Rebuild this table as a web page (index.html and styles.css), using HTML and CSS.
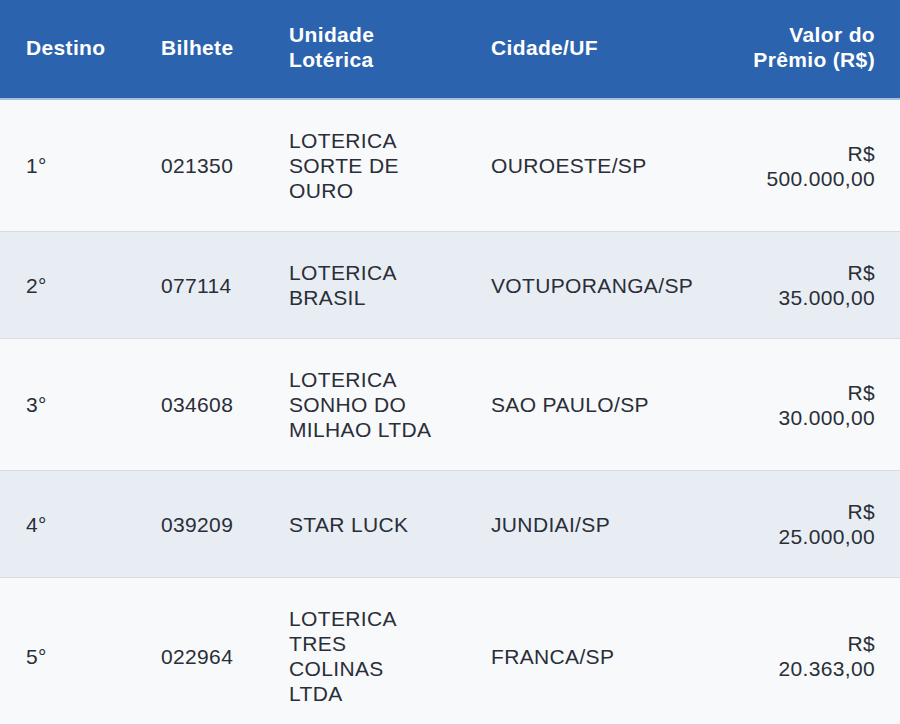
FILE: index.html
```html
<!DOCTYPE html>
<html lang="pt-BR">
<head>
<meta charset="utf-8">
<title>Resultado</title>
<link rel="stylesheet" href="styles.css">
</head>
<body>
<table class="results">
  <colgroup>
    <col class="c1"><col class="c2"><col class="c3"><col class="c4"><col class="c5">
  </colgroup>
  <thead>
    <tr>
      <th>Destino</th>
      <th>Bilhete</th>
      <th>Unidade<br>Lotérica</th>
      <th>Cidade/UF</th>
      <th class="num">Valor do<br>Prêmio (R$)</th>
    </tr>
  </thead>
  <tbody>
    <tr>
      <td>1°</td><td>021350</td><td>LOTERICA<br>SORTE DE<br>OURO</td><td>OUROESTE/SP</td><td class="num">R$<br>500.000,00</td>
    </tr>
    <tr>
      <td>2°</td><td>077114</td><td>LOTERICA<br>BRASIL</td><td>VOTUPORANGA/SP</td><td class="num">R$<br>35.000,00</td>
    </tr>
    <tr>
      <td>3°</td><td>034608</td><td>LOTERICA<br>SONHO DO<br>MILHAO LTDA</td><td>SAO PAULO/SP</td><td class="num">R$<br>30.000,00</td>
    </tr>
    <tr>
      <td>4°</td><td>039209</td><td>STAR LUCK</td><td>JUNDIAI/SP</td><td class="num">R$<br>25.000,00</td>
    </tr>
    <tr>
      <td>5°</td><td>022964</td><td>LOTERICA<br>TRES<br>COLINAS<br>LTDA</td><td>FRANCA/SP</td><td class="num">R$<br>20.363,00</td>
    </tr>
  </tbody>
</table>
</body>
</html>
```
FILE: styles.css
```css
html, body {
  margin: 0;
  padding: 0;
  background: #f7f9fa;
}
body {
  font-family: "Liberation Sans", Arial, sans-serif;
  color: #2a2e38;
}
.results {
  width: 900px;
  border-collapse: collapse;
  table-layout: fixed;
}
.c1 { width: 135px; }
.c2 { width: 128px; }
.c3 { width: 202px; }
.c4 { width: 235px; }
.c5 { width: 200px; }
.results th {
  background: #2c63ae;
  color: #ffffff;
  font-weight: bold;
  font-size: 21px;
  letter-spacing: 0.35px;
  line-height: 25px;
  text-align: left;
  padding: 22px 25px 26px 26px;
  border-bottom: 2px solid #a9bfdd;
  vertical-align: middle;
  white-space: nowrap;
}
.results td {
  font-size: 21px;
  letter-spacing: 0.35px;
  line-height: 25px;
  padding: 28px 25px 28px 26px;
  vertical-align: middle;
  border-bottom: 1px solid #d8dce2;
  white-space: nowrap;
}
.results tbody tr:nth-child(odd) td { background: #f7f9fa; }
.results tbody tr:nth-child(even) td { background: #e8edf3; }
.results .num { text-align: right; }
```
